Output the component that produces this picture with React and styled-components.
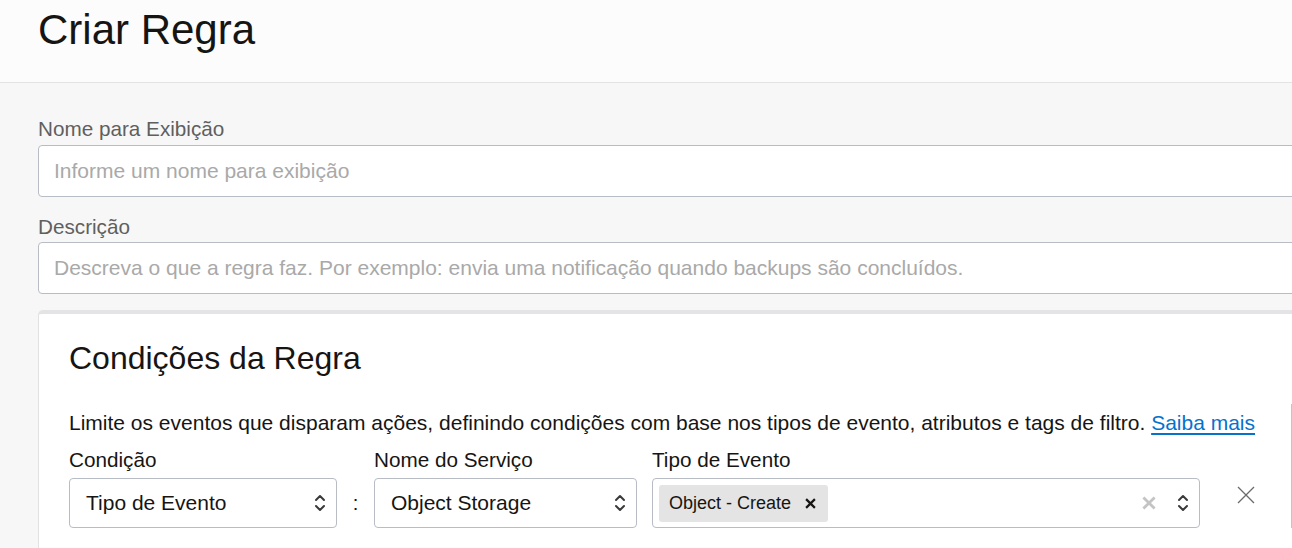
import React from 'react';
import styled, {createGlobalStyle} from 'styled-components';

const GlobalStyle = createGlobalStyle`
    html, body {
        margin: 0;
        padding: 0;
        background: #f7f7f7;
        overflow: hidden;
    }
    body {
        font-family: "Liberation Sans", Arial, sans-serif;
        color: #161513;
    }
`;

const Page = styled.div`
    width: 1292px;
    height: 548px;
    overflow: hidden;
`;

const Header = styled.header`
    height: 82px;
    background: #fcfcfc;
    border-bottom: 1px solid #e3e3e3;
    padding-left: 38px;
    display: flex;
    align-items: flex-start;
`;

const Title = styled.h1`
    margin: 0;
    margin-top: 6px;
    font-size: 42px;
    font-weight: 400;
    line-height: 48px;
    color: #161513;
`;

const Main = styled.main`
    width: 1400px;
    padding: 34px 0 0 38px;
    display: flex;
    flex-direction: column;
`;

const FieldLabel = styled.label`
    display: block;
    font-size: 20.7px;
    line-height: 24px;
    color: ${props => props.muted ? '#5f5f5f' : '#161513'};
    margin-bottom: ${props => props.gap || 4}px;
`;

const TextInput = styled.input`
    box-sizing: border-box;
    width: 100%;
    height: 52px;
    border: 1px solid #b8bcc4;
    border-radius: 4px;
    background: #fff;
    padding: 0 15px;
    font-family: inherit;
    font-size: 21px;
    color: #161513;
    margin-bottom: ${props => props.gap || 0}px;
    &::placeholder {
        color: #a9a9a9;
    }
`;

const Card = styled.section`
    background: #fff;
    border-top: 4px solid #e4e4e7;
    border-left: 1px solid #e2e2e2;
    border-top-left-radius: 5px;
    padding: 25px 0 40px 30px;
`;

const CardTitle = styled.h2`
    margin: 0 0 27px;
    font-size: 32px;
    font-weight: 400;
    line-height: 38px;
    color: #161513;
`;

// the list of conditions; its right edge is just inside the window
const Conditions = styled.div`
    width: 1222px;
    padding-top: 7px;
    border-right: 1px solid #c4c4c4;
`;

const Intro = styled.p`
    margin: 0 0 13px;
    font-size: 21px;
    line-height: 24px;
    color: #161513;
`;

const Link = styled.a`
    color: #0572ce;
    text-decoration: underline;
    text-underline-offset: 3px;
    cursor: pointer;
`;

const ConditionRow = styled.div`
    display: flex;
    align-items: flex-end;
`;

const Field = styled.div`
    width: ${props => props.width}px;
    margin-left: ${props => props.offset || 0}px;
    display: flex;
    flex-direction: column;
`;

const Colon = styled.div`
    width: 37px;
    height: 50px;
    display: flex;
    align-items: center;
    justify-content: center;
    font-size: 20px;
    color: #161513;
`;

const Select = styled.div`
    box-sizing: border-box;
    height: 50px;
    border: 1px solid #b8bcc4;
    border-radius: 4px;
    background: #fff;
    display: flex;
    align-items: center;
    padding: 0 10px 0 16px;
    font-size: 21px;
    color: #161513;
`;

const SelectValue = styled.span`
    flex: 1;
`;

const MultiSelect = styled(Select)`
    padding-left: 6px;
`;

const Chip = styled.span`
    height: 37px;
    background: #e4e4e4;
    border-radius: 3px;
    display: inline-flex;
    align-items: center;
    gap: 14px;
    padding: 0 12px 0 10px;
    font-size: 18px;
    color: #161513;
`;

const Spacer = styled.span`
    flex: 1;
`;

const IconButton = styled.button`
    border: 0;
    background: transparent;
    padding: 0;
    display: inline-flex;
    align-items: center;
    justify-content: center;
    cursor: pointer;
    width: ${props => props.size || 20}px;
    height: ${props => props.size || 20}px;
    margin-right: ${props => props.gap || 0}px;
`;

const RemoveButton = styled(IconButton)`
    height: 50px;
    width: 22px;
    margin-left: 35px;
    padding-bottom: 16px;
`;

const UpDown = () => (
    <svg width="12" height="24" viewBox="0 0 12 24">
        <path d="M2 9 L6 5 L10 9" fill="none" stroke="#3a3a3a" strokeWidth="2" strokeLinecap="round" strokeLinejoin="round"/>
        <path d="M2 15 L6 19 L10 15" fill="none" stroke="#3a3a3a" strokeWidth="2" strokeLinecap="round" strokeLinejoin="round"/>
    </svg>
);

const Cross = ({size, color, weight}) => (
    <svg width={size} height={size} viewBox="0 0 20 20">
        <path d="M2 2 L18 18 M18 2 L2 18" fill="none" stroke={color} strokeWidth={weight}/>
    </svg>
);

const App = () => (
    <Page>
        <GlobalStyle/>
        <Header>
            <Title>Criar Regra</Title>
        </Header>
        <Main>
            <FieldLabel muted>Nome para Exibição</FieldLabel>
            <TextInput gap={18} placeholder="Informe um nome para exibição"/>
            <FieldLabel muted gap={3}>Descrição</FieldLabel>
            <TextInput gap={16} placeholder="Descreva o que a regra faz. Por exemplo: envia uma notificação quando backups são concluídos."/>
            <Card>
                <CardTitle>Condições da Regra</CardTitle>
                <Conditions>
                    <Intro>
                        Limite os eventos que disparam ações, definindo condições com base nos tipos de evento, atributos e tags de filtro. <Link>Saiba mais</Link>
                    </Intro>
                    <ConditionRow>
                        <Field width={268}>
                            <FieldLabel gap={6}>Condição</FieldLabel>
                            <Select>
                                <SelectValue>Tipo de Evento</SelectValue>
                                <UpDown/>
                            </Select>
                        </Field>
                        <Colon>:</Colon>
                        <Field width={263}>
                            <FieldLabel gap={6}>Nome do Serviço</FieldLabel>
                            <Select>
                                <SelectValue>Object Storage</SelectValue>
                                <UpDown/>
                            </Select>
                        </Field>
                        <Field width={548} offset={15}>
                            <FieldLabel gap={6}>Tipo de Evento</FieldLabel>
                            <MultiSelect>
                                <Chip>
                                    Object - Create
                                    <Cross size={11} color="#161513" weight={4}/>
                                </Chip>
                                <Spacer/>
                                <IconButton size={20} gap={18}>
                                    <Cross size={14} color="#c4c4c4" weight={4}/>
                                </IconButton>
                                <UpDown/>
                            </MultiSelect>
                        </Field>
                        <RemoveButton>
                            <Cross size={20} color="#6b6b6b" weight={1.3}/>
                        </RemoveButton>
                    </ConditionRow>
                </Conditions>
            </Card>
        </Main>
    </Page>
);

export default App;
